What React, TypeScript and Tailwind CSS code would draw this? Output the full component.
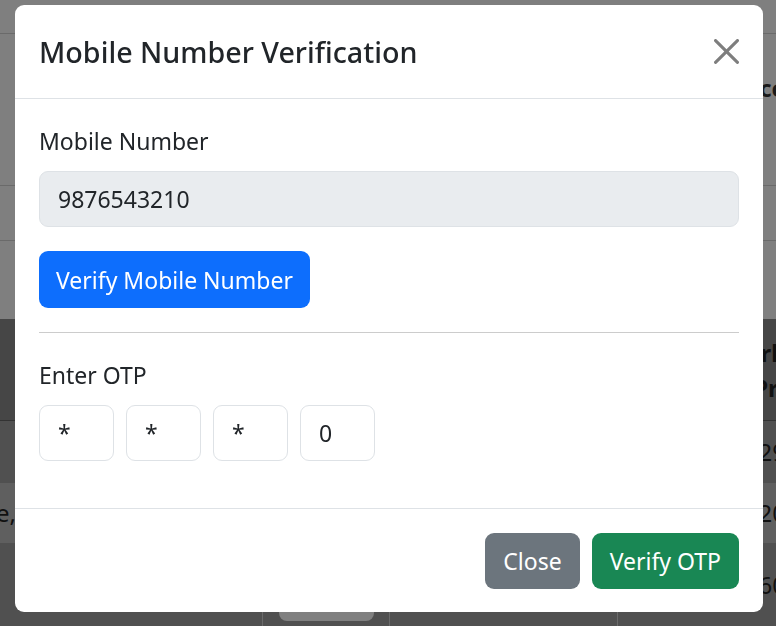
import { useState } from "react";

const font = { fontFamily: '"Noto Sans", "Open Sans", sans-serif' };

const BackgroundPage = () => {
  return (
    <div className="h-[626px] w-full overflow-hidden bg-[#7f7f7f] text-black" style={font}>
      <div className="h-[34px] border-b border-[#6a6a6a]" />
      <div className="flex h-[152px] justify-end border-b border-[#6a6a6a] pt-[36px]">
        <span className="mr-[-8px] text-[24px] font-bold text-[#1a1a1a]">cc</span>
      </div>
      <div className="h-[55px] border-b border-[#6a6a6a]" />
      <div className="h-[78px]" />
      <div className="flex h-[102px] flex-col items-end justify-center border-b border-[#333] bg-[#464646] text-[24px] font-bold leading-[35px] text-[#111]">
        <span className="mr-[-10px]">rk</span>
        <span className="mr-[-10px]">Pri</span>
      </div>
      <div className="flex h-[62px] items-center justify-end bg-[#505050] text-[24px] text-[#111]">
        <span className="mr-[-10px]">29</span>
      </div>
      <div className="flex h-[60px] items-center justify-between bg-[#5f5f5f] text-[24px] text-[#111]">
        <span className="ml-[-4px]">e,</span>
        <span className="mr-[-10px]">20</span>
      </div>
      <div className="grid h-[83px] grid-cols-[263px_127px_228px_1fr] bg-[#505050] text-[24px] text-[#111]">
        <div className="border-r border-[#6a6a6a]" />
        <div className="flex items-end justify-center border-r border-[#6a6a6a]">
          <div className="mb-[5px] h-[20px] w-[95px] rounded-[8px] bg-[#808080]" />
        </div>
        <div className="border-r border-[#6a6a6a]" />
        <div className="flex items-center justify-end">
          <span className="mr-[-10px]">60</span>
        </div>
      </div>
    </div>
  );
};

const OtpBox = ({ value }: { value: string }) => (
  <input
    readOnly
    value={value}
    className="h-[56px] w-[75px] rounded-[9px] border border-[#dee2e6] bg-white px-[18px] text-[23px] text-[#212529] outline-none"
    style={font}
  />
);

export default function App() {
  const [otp] = useState(["*", "*", "*", "0"]);

  return (
    <div className="relative h-[626px] w-full overflow-hidden">
      <BackgroundPage />
      <div className="fixed inset-0 overflow-hidden" style={font}>
        <div className="ml-[15px] mt-[5px] w-[748px] rounded-[9px] bg-white text-[#212529]">
          <div className="flex items-center justify-between border-b border-[#dee2e6] px-[24px] py-[24px]">
            <h5 className="text-[28.7px] font-medium leading-[45px]">Mobile Number Verification</h5>
            <button className="flex h-[25px] w-[25px] items-center justify-center opacity-50">
              <svg viewBox="0 0 16 16" className="h-[25px] w-[25px]" fill="#000">
                <path d="M.293.293a1 1 0 0 1 1.414 0L8 6.586 14.293.293a1 1 0 1 1 1.414 1.414L9.414 8l6.293 6.293a1 1 0 0 1-1.414 1.414L8 9.414l-6.293 6.293a1 1 0 0 1-1.414-1.414L6.586 8 .293 1.707a1 1 0 0 1 0-1.414z" />
              </svg>
            </button>
          </div>

          <div className="px-[24px] pt-[24px] pb-[47px]">
            <label className="mb-[12px] block text-[23px] leading-[36px]">Mobile Number</label>
            <input
              readOnly
              value="9876543210"
              className="block h-[56px] w-full rounded-[9px] border border-[#dee2e6] bg-[#e9ecef] px-[18px] text-[23px] text-[#212529] outline-none"
              style={font}
            />
            <button className="mt-[24px] h-[57px] rounded-[9px] bg-[#0d6efd] px-[17px] text-[23px] leading-[36px] text-white">
              Verify Mobile Number
            </button>
            <hr className="my-[24px] border-t border-[#cccccc]" />
            <label className="mb-[12px] block text-[23px] leading-[36px]">Enter OTP</label>
            <div className="flex gap-[12px]">
              {otp.map((v, i) => (
                <OtpBox key={i} value={v} />
              ))}
            </div>
          </div>

          <div className="flex justify-end gap-[12px] border-t border-[#dee2e6] px-[24px] pt-[24px] pb-[23px]">
            <button className="h-[56px] rounded-[9px] bg-[#6c757d] px-[18px] text-[23px] leading-[36px] text-white">
              Close
            </button>
            <button className="h-[56px] rounded-[9px] bg-[#198754] px-[18px] text-[23px] leading-[36px] text-white">
              Verify OTP
            </button>
          </div>
        </div>
      </div>
    </div>
  );
}
